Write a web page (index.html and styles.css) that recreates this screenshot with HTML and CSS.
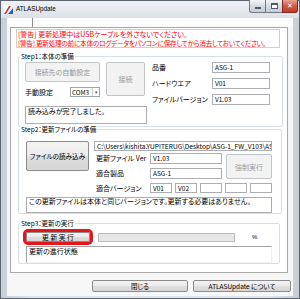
FILE: index.html
```html
<!DOCTYPE html>
<html lang="ja">
<head>
  <meta charset="UTF-8">
  <title>ATLASUpdate</title>
  <link rel="stylesheet" href="styles.css">
</head>
<body>
  <div class="window">
    <div class="titlebar">
      <svg class="app-icon" width="9" height="9" viewBox="0 0 9 9">
        <rect x="0" y="0" width="9" height="9" fill="#fff"/>
        <polygon points="0,9 2,9 7,1 5,1" fill="#d8342a"/>
        <polygon points="4,9 9,9 9,3" fill="#2b5fb8"/>
      </svg>
      <span class="title">ATLASUpdate</span>
      <div class="caption-btns">
        <div class="cap-btn cap-min"><span></span></div>
        <div class="cap-btn cap-max"><span></span></div>
        <div class="cap-btn cap-close">✕</div>
      </div>
    </div>

    <div class="client">
      <div class="tabstrip"><div class="tab"></div></div>

      <div class="panel">
        <div class="warning">
          <p>[警告] 更新処理中はUSBケーブルを外さないでください。</p>
          <p class="long">[警告] 更新処理の前に本体のログデータをパソコンに保存してから消去しておいてください。</p>
        </div>

        <!-- Step1 -->
        <div class="group step1">
          <div class="group-title">Step1：本体の準備</div>
          <div class="s1-body">
            <div class="s1-left">
              <div class="s1-grid">
                <div class="btn disabled auto-btn">接続先の自動設定</div>
                <div class="btn disabled connect-btn">接続</div>
                <div class="manual">
                  <span>手動設定</span>
                  <div class="combo"><span>COM3</span><span class="arrow">▾</span></div>
                </div>
              </div>
              <div class="textbox status1">読み込みが完了しました。</div>
            </div>
            <div class="s1-right">
              <span class="lbl">品番</span><div class="textbox field">ASG-1</div>
              <span class="lbl">ハードウエア</span><div class="textbox field">V01</div>
              <span class="lbl">ファイルバージョン</span><div class="textbox field">V1.03</div>
            </div>
          </div>
        </div>

        <!-- Step2 -->
        <div class="group step2">
          <div class="group-title">Step2：更新ファイルの準備</div>
          <div class="s2-body">
            <div class="btn load-btn">ファイルの読み込み</div>
            <div class="s2-right">
              <div class="textbox path">C:\Users\kishita.YUPITERUG\Desktop\ASG-1_FW_V103\ASG-1_FW_V103.bin</div>
              <div class="s2-grid">
                <span class="lbl">更新ファイル Ver</span>
                <div class="textbox field">V1.03</div>
                <div class="btn disabled force-btn">強制実行</div>
                <span class="lbl">適合製品</span>
                <div class="textbox field">ASG-1</div>
                <span class="lbl">適合バージョン</span>
                <div class="versions">
                  <div class="textbox ver">V01</div>
                  <div class="textbox ver">V02</div>
                  <div class="textbox ver"></div>
                  <div class="textbox ver"></div>
                  <div class="textbox ver"></div>
                </div>
              </div>
            </div>
          </div>
          <div class="textbox message">この更新ファイルは本体と同じバージョンです。更新する必要はありません。</div>
        </div>

        <!-- Step3 -->
        <div class="group step3">
          <div class="group-title">Step3：更新の実行</div>
          <div class="s3-row">
            <div class="btn run-btn">更 新 実 行</div>
            <div class="progress"></div>
            <span class="pct">%</span>
          </div>
          <div class="sunken progress-text">更新の進行状態</div>
        </div>
      </div>

      <div class="footer">
        <div class="btn foot-btn close-btn">閉じる</div>
        <div class="btn foot-btn about-btn">ATLASUpdate について</div>
      </div>
    </div>
  </div>
</body>
</html>
```

FILE: styles.css
```css
* {
  box-sizing: border-box;
}
body {
  margin: 0;
  width: 300px;
  height: 299px;
  overflow: hidden;
  font-family: "Noto Sans CJK JP", sans-serif;
  font-size: 7px;
  font-feature-settings: "palt" 1;
  color: #000;
  background: #fff;
}
p {
  margin: 0;
}
.window {
  width: 300px;
  height: 299px;
  border: 1px solid #5d6670;
  background: linear-gradient(to right, #c7ced6, #dfe4ea 10%, #dfe4ea 90%, #c7ced6);
  display: flex;
  flex-direction: column;
}
.titlebar {
  height: 17px;
  display: flex;
  align-items: flex-start;
  position: relative;
  background: linear-gradient(#eef1f4, #dce1e7);
}
.app-icon {
  margin: 4px 0 0 3px;
}
.title {
  margin: 3px 0 0 3px;
  font-family: "Liberation Sans", sans-serif;
  font-size: 6.3px;
  line-height: 9px;
  font-feature-settings: normal;
}
.caption-btns {
  position: absolute;
  right: 1px;
  top: -1px;
  display: flex;
}
.cap-btn {
  height: 13px;
  border: 1px solid #6f7a86;
  border-top: none;
  background: linear-gradient(#f4f6f8, #d6dce3 50%, #c6cdd6);
  display: flex;
  align-items: center;
  justify-content: center;
}
.cap-min {
  width: 16px;
  border-radius: 0 0 0 3px;
  border-right: none;
}
.cap-min span {
  width: 6px;
  height: 2px;
  margin-top: 4px;
  background: #fff;
  border: 1px solid #505a66;
}
.cap-max {
  width: 17px;
  border-right: none;
}
.cap-max span {
  width: 7px;
  height: 6px;
  border: 1px solid #505a66;
  border-top-width: 2px;
  background: #fff;
}
.cap-close {
  width: 16px;
  border-color: #7a2a22;
  border-radius: 0 0 3px 0;
  background: linear-gradient(#e8a393, #d0573f 50%, #c43c25);
  color: #fff;
  font-family: "DejaVu Sans", sans-serif;
  font-size: 7px;
  font-weight: bold;
}

.client {
  margin: 0 6px 2px 6px;
  flex: 1;
  background: #f7f7f7;
  display: flex;
  flex-direction: column;
}
.tabstrip {
  height: 9px;
  background: #fbfbfb;
}
.tab {
  width: 26px;
  height: 9px;
  border-right: 1px solid #8a8a8a;
}
.panel {
  height: 246px;
  margin: 0 5px 0 3px;
  border: 1px solid #a8a8a8;
  background: #fff;
}
.warning {
  height: 19px;
  margin: 1px 7px 0 5px;
  border: 1px solid #cfcfcf;
  padding: 0 1px;
  color: #ff0000;
  line-height: 8.5px;
  white-space: nowrap;
  overflow: hidden;
}
.warning .long {
  font-size: 6.7px;
  letter-spacing: -0.3px;
}

.group {
  border: 1px solid #d5dfe5;
  border-radius: 2px;
}
.group-title {
  width: fit-content;
  margin: -5px 0 0 1px;
  padding: 0 1px;
  background: #fff;
  line-height: 9px;
  height: 9px;
  font-size: 6.5px;
}
.step1 {
  margin: 8px 4px 0 7px;
  height: 71px;
}
.s1-body {
  display: flex;
  margin: 1px 0 0 6px;
}
.s1-left {
  width: 123px;
}
.s1-grid {
  display: grid;
  grid-template-columns: 75px 39px;
  grid-template-rows: 20px 15px;
  column-gap: 6px;
}
.btn {
  display: flex;
  align-items: center;
  justify-content: center;
  border: 1px solid #8c8c8c;
  border-radius: 2px;
  background: linear-gradient(#f3f3f3, #ebebeb 50%, #dedede 51%, #d6d6d6);
  white-space: nowrap;
}
.btn.disabled {
  border-color: #c2c5c8;
  background: #f2f2f2;
  color: #9a9a9a;
}
.auto-btn {
  height: 20px;
}
.connect-btn {
  grid-row: 1 / 3;
  grid-column: 2;
  height: 34px;
}
.manual {
  display: flex;
  align-items: center;
  align-self: end;
  height: 10px;
}
.manual span {
  width: 45px;
}
.combo {
  width: 30px;
  height: 10px;
  border: 1px solid #9ea3a8;
  background: #fff;
  display: flex;
  align-items: center;
  padding-left: 1px;
  font-size: 6.3px;
}
.combo span:first-child {
  width: auto;
  flex: 1;
}
.combo .arrow {
  width: 7px;
  height: 8px;
  border-left: 1px solid #d0d0d0;
  font-size: 5px;
  line-height: 8px;
  text-align: center;
  color: #555;
}
.textbox {
  border: 1px solid #abadb3;
  background: #fff;
  padding: 0 2px;
  line-height: 9px;
  white-space: nowrap;
  overflow: hidden;
  font-size: 6.5px;
}
.status1 {
  margin-top: 9px;
  width: 122px;
  height: 18px;
  font-size: 7px;
}
.s1-right {
  margin-left: 4px;
  display: grid;
  grid-template-columns: 60px 58px;
  grid-auto-rows: 11px;
  row-gap: 5px;
  align-items: center;
}
.lbl {
  white-space: nowrap;
  line-height: 9px;
}
.field {
  height: 11px;
}

.step2 {
  margin: 2px 5px 0 7px;
  height: 85px;
}
.s2-body {
  display: flex;
  margin: 7px 0 0 7px;
}
.load-btn {
  width: 63px;
  height: 30px;
  font-size: 6.6px;
}
.s2-right {
  margin-left: 5px;
  width: 178px;
}
.path {
  height: 10px;
  line-height: 8px;
  font-size: 6.6px;
}
.s2-grid {
  margin-top: 2px;
  display: grid;
  grid-template-columns: 56px 72px 4px 46px;
  grid-template-rows: 11px 11px 10px;
  row-gap: 4px;
  align-items: center;
}
.s2-grid > .lbl {
  grid-column: 1;
  padding-left: 2px;
}
.s2-grid > .field {
  grid-column: 2;
}
.force-btn {
  grid-column: 4;
  grid-row: 1 / 3;
  height: 25px;
  align-self: start;
  margin-top: 1px;
}
.versions {
  grid-column: 2 / 5;
  display: grid;
  grid-template-columns: repeat(5, 1fr);
  column-gap: 3.5px;
  height: 10px;
}
.ver {
  height: 10px;
  line-height: 8px;
}
.message {
  margin: 4px 0 0 7px;
  width: 246px;
  height: 16px;
  line-height: 7px;
  font-size: 7px;
}

.step3 {
  margin: 9px 7px 0 7px;
  height: 41px;
}
.s3-row {
  display: flex;
  align-items: center;
  margin: 4px 0 0 7px;
}
.run-btn {
  width: 64px;
  height: 10px;
  outline: 3px solid #e8141b;
  font-size: 6.8px;
  line-height: 8px;
}
.progress {
  width: 137px;
  height: 9px;
  margin-left: 8px;
  border: 1px solid #bcbcbc;
  background: #e6e6e6;
}
.pct {
  margin-left: 17px;
  font-family: "Liberation Sans", sans-serif;
  font-size: 6px;
}
.sunken {
  border-top: 1px solid #a0a0a0;
  border-left: 1px solid #a0a0a0;
  border-right: 1px solid #f0f0f0;
  border-bottom: 1px solid #f0f0f0;
  padding: 0 2px;
  line-height: 8px;
}
.progress-text {
  margin: 4px 0 0 7px;
  width: 246px;
  height: 17px;
}

.footer {
  margin-top: 7px;
  display: flex;
  justify-content: flex-end;
  gap: 5px;
  padding-right: 2px;
}
.foot-btn {
  height: 12px;
  font-size: 6.5px;
}
.close-btn {
  width: 96px;
}
.about-btn {
  width: 98px;
}
```
